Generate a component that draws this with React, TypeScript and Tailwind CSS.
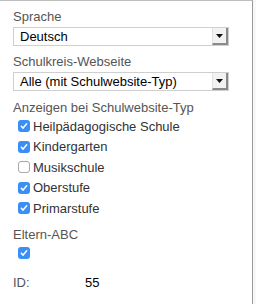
import React from "react";

const types = [
  { name: "Heilpädagogische Schule", checked: true },
  { name: "Kindergarten", checked: true },
  { name: "Musikschule", checked: false },
  { name: "Oberstufe", checked: true },
  { name: "Primarstufe", checked: true },
];

const Check = ({ checked }: { checked: boolean }) =>
  checked ? (
    <span className="flex h-[12px] w-[12px] items-center justify-center rounded-[3px] bg-[#3a8ff6]">
      <svg width="8" height="8" viewBox="0 0 8 8">
        <path d="M1.3 4.3 L3.1 6.1 L6.7 1.8" fill="none" stroke="white" strokeWidth="1.5" strokeLinecap="round" strokeLinejoin="round" />
      </svg>
    </span>
  ) : (
    <span className="h-[12px] w-[12px] rounded-[3px] border border-[#a8a8a8] bg-white" />
  );

const Select = ({ value }: { value: string }) => (
  <div className="mt-[2px] flex h-[19px] w-[216px] items-center border border-[#cfcfcf] bg-white">
    <span className="flex-1 pl-[6px] text-[13px] leading-none text-black">{value}</span>
    <span className="flex h-full w-[16px] items-center justify-center border-l border-[#e2e2e2] border-r-2 border-b-2 border-r-[#8a8a8a] border-b-[#8a8a8a] bg-[#f2f2f2]">
      <svg width="7" height="4" viewBox="0 0 7 4">
        <path d="M0 0 H7 L3.5 4 Z" fill="#111" />
      </svg>
    </span>
  </div>
);

const Label = ({ children, className = "" }: { children: React.ReactNode; className?: string }) => (
  <div className={"text-[13px] leading-[16px] text-[#555] " + className}>{children}</div>
);

export default function App() {
  return (
    <div className="flex h-[304px] w-[256px] bg-[#f8f8f8]" style={{ fontFamily: '"Liberation Sans", Arial, sans-serif' }}>
      <div className="h-full w-[253px] border-t border-r border-t-[#bdbdbd] border-r-[#9a9a9a] bg-white pl-[13px] pt-[8px]">
        <Label>Sprache</Label>
        <Select value="Deutsch" />

        <Label className="mt-[8px]">Schulkreis-Webseite</Label>
        <Select value="Alle (mit Schulwebsite-Typ)" />

        <Label className="mt-[9px]">Anzeigen bei Schulwebsite-Typ</Label>
        <div className="flex flex-col">
          {types.map((t) => (
            <div key={t.name} className="flex h-[20.5px] items-center gap-[3px] pl-[5px]">
              <Check checked={t.checked} />
              <span className="text-[13px] leading-none text-[#333]">{t.name}</span>
            </div>
          ))}
        </div>

        <Label className="mt-[8px]">Eltern-ABC</Label>
        <div className="flex h-[20.5px] items-center pl-[5px]">
          <Check checked />
        </div>

        <div className="mt-[12px] flex text-[13px] leading-[16px]">
          <span className="w-[72px] text-[#555]">ID:</span>
          <span className="text-black">55</span>
        </div>
      </div>
    </div>
  );
}
